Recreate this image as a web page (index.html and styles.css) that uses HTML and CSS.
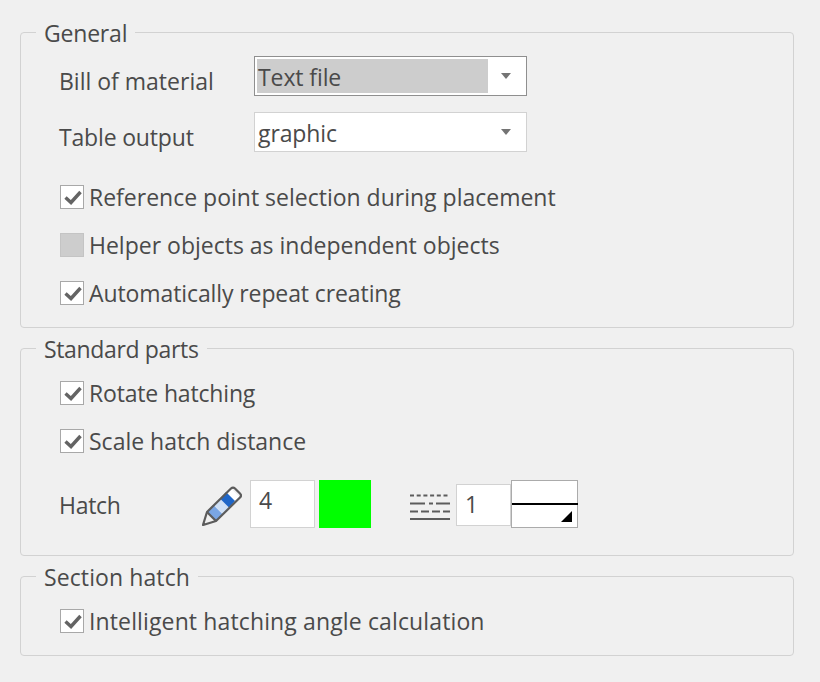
FILE: index.html
```html
<!DOCTYPE html>
<html lang="en">
<head>
<meta charset="utf-8">
<title>Settings</title>
<link rel="stylesheet" href="styles.css">
</head>
<body>
<form class="page">
  <fieldset class="group group-general">
    <legend class="legend-general">General</legend>
    <div class="field-row">
      <span class="field-label">Bill of material</span>
      <div class="combo combo-focus"><span class="combo-value">Text file</span><span class="combo-arrow"></span></div>
    </div>
    <div class="field-row field-row-second">
      <span class="field-label tighter">Table output</span>
      <div class="combo"><span class="combo-value">graphic</span><span class="combo-arrow"></span></div>
    </div>
    <div class="checks checks-general">
      <div class="check-row"><span class="box"><svg viewBox="0 0 22 22" class="tick"><path d="M4.500 11.500l5.500 5 9.500-10.500"/></svg></span><span>Reference point selection during placement</span></div>
      <div class="check-row"><span class="box box-mixed"></span><span>Helper objects as independent objects</span></div>
      <div class="check-row"><span class="box"><svg viewBox="0 0 22 22" class="tick"><path d="M4.500 11.500l5.500 5 9.500-10.500"/></svg></span><span class="tight">Automatically repeat creating</span></div>
    </div>
  </fieldset>

  <fieldset class="group group-parts">
    <legend class="legend-parts">Standard parts</legend>
    <div class="checks">
      <div class="check-row"><span class="box"><svg viewBox="0 0 22 22" class="tick"><path d="M4.500 11.500l5.500 5 9.500-10.500"/></svg></span><span class="tighter">Rotate hatching</span></div>
      <div class="check-row"><span class="box"><svg viewBox="0 0 22 22" class="tick"><path d="M4.500 11.500l5.500 5 9.500-10.500"/></svg></span><span>Scale hatch distance</span></div>
    </div>
    <div class="hatch-row">
      <span class="hatch-label">Hatch</span>
      <svg class="pencil" viewBox="0 0 40 40" aria-hidden="true">
        <path d="M29 2.500L24 6l9 9 5-3.500z" fill="#fff"/>
        <path d="M5 26L11.300 18.800 20.300 27.800 14 35z" fill="#7aa6e4"/>
        <path d="M11.300 18.800L18.200 12.700 27.200 21.700 20.300 27.800z" fill="#cfe0f6"/>
        <path d="M18.200 12.700L24 6 33 15 27.200 21.700z" fill="#1f66c8"/>
        <path d="M5 26L29 2.500q2-2 4 0l5 5q2 2 0 4L14 35 1 39z" fill="none" stroke="#5c5c5c" stroke-width="2.200" stroke-linejoin="round"/>
        <path d="M5 26L14 35" stroke="#5c5c5c" stroke-width="2.200"/>
      </svg>
      <div class="num num-pen">4</div>
      <div class="swatch"></div>
      <svg class="linetypes" viewBox="0 0 40 26" aria-hidden="true">
        <path d="M0 1.500h40" stroke-dasharray="4 2.700"/>
        <path d="M0 9.500h15M19 9.500h4M26 9.500h14"/>
        <path d="M0 17.500h8M11 17.500h8M22 17.500h8M33 17.500h7"/>
        <path d="M0 25h40"/>
      </svg>
      <div class="num num-line">1</div>
      <div class="line-pick"><span class="line-sample"></span><span class="line-corner"></span></div>
    </div>
  </fieldset>

  <fieldset class="group group-section">
    <legend class="legend-section">Section hatch</legend>
    <div class="checks">
      <div class="check-row"><span class="box"><svg viewBox="0 0 22 22" class="tick"><path d="M4.500 11.500l5.500 5 9.500-10.500"/></svg></span><span class="wide">Intelligent hatching angle calculation</span></div>
    </div>
  </fieldset>
</form>
</body>
</html>
```
FILE: styles.css
```css
* { box-sizing: border-box; }
html, body { margin: 0; padding: 0; }
body {
  width: 820px;
  height: 682px;
  overflow: hidden;
  background: #f0f0f0;
  color: #4a4a4a;
  font-family: "Open Sans", "Noto Sans", sans-serif;
  font-size: 23px;
  line-height: 32px;
}
.page {
  display: flex;
  flex-direction: column;
  gap: 20px;
  padding: 32px 26px 0 20px;
}
.group {
  position: relative;
  margin: 0;
  padding: 0 0 0 39px;
  border: 1px solid #d2d2d2;
  border-radius: 4px;
  min-width: 0;
}
.group legend {
  position: absolute;
  top: -16px;
  left: 15px;
  padding: 0 8px;
  background: #f0f0f0;
  line-height: 32px;
}
.group .legend-general { letter-spacing: -0.2px; }
.group .legend-parts { letter-spacing: -0.35px; }
.group .legend-section { letter-spacing: 0.1px; }
.group-general { height: 296px; padding-top: 23px; }
.group-parts { height: 208px; padding-top: 32px; }
.group-section { height: 80px; padding-top: 32px; }
.field-row { display: flex; align-items: center; height: 40px; }
.field-row-second { margin-top: 16px; }
.field-label { width: 195px; flex: none; margin-left: -1px; padding-top: 10px; }
.combo {
  position: relative;
  width: 273px;
  height: 40px;
  flex: none;
  background: #fff;
  border: 1px solid #d2d2d2;
  padding: 2px;
  display: flex;
  align-items: center;
}
.combo-focus { border-color: #8f8f8f; }
.combo-value { width: 231px; height: 34px; padding-left: 1px; line-height: 40px; margin-top: -4px; letter-spacing: -0.1px; }
.combo-focus .combo-value { background: #cdcdcd; margin-top: 0; line-height: 36px; }
.combo-arrow {
  position: absolute;
  right: 15px;
  top: 16px;
  border-left: 5px solid transparent;
  border-right: 5px solid transparent;
  border-top: 6px solid #747474;
}
.checks { display: flex; flex-direction: column; gap: 24px; }
.checks-general { margin-top: 33px; }
.check-row { display: flex; align-items: center; gap: 5px; height: 24px; }
.box {
  width: 24px;
  height: 24px;
  flex: none;
  background: #fff;
  border: 1px solid #a8a8a8;
  display: block;
}
.box-mixed { background: #cdcdcd; border-color: #c4c4c4; }
.tick { display: block; width: 22px; height: 22px; fill: none; stroke: #646464; stroke-width: 3.400; }
.tight { letter-spacing: -0.1px; }
.tighter { letter-spacing: -0.17px; }
.wide { letter-spacing: 0.13px; }
.hatch-row { display: flex; align-items: center; height: 48px; margin-top: 27px; }
.hatch-label { width: 142px; flex: none; margin-left: -1px; margin-right: 1px; padding-top: 2px; letter-spacing: -0.3px; }
.pencil { width: 40px; height: 40px; flex: none; margin-top: 3px; }
.num {
  flex: none;
  background: #fff;
  border: 1px solid #d2d2d2;
  padding-left: 8px;
  line-height: 38px;
}
.num-pen { width: 65px; height: 48px; margin-left: 8px; }
.swatch { width: 52px; height: 48px; margin-left: 4px; flex: none; background: #00ff00; }
.linetypes { width: 40px; height: 26px; margin-left: 39px; flex: none; fill: none; stroke: #5c5c5c; stroke-width: 2; margin-top: 6px; }
.num-line { width: 55px; height: 42px; margin-left: 6px; margin-top: 1px; }
.line-pick {
  position: relative;
  width: 67px;
  height: 48px;
  flex: none;
  background: #fff;
  border: 1px solid #ababab;
}
.line-sample { position: absolute; left: 0; right: -1px; top: 22px; height: 2px; background: #000; }
.line-corner {
  position: absolute;
  right: 5px;
  bottom: 5px;
  border-left: 11px solid transparent;
  border-bottom: 11px solid #000;
}
```
